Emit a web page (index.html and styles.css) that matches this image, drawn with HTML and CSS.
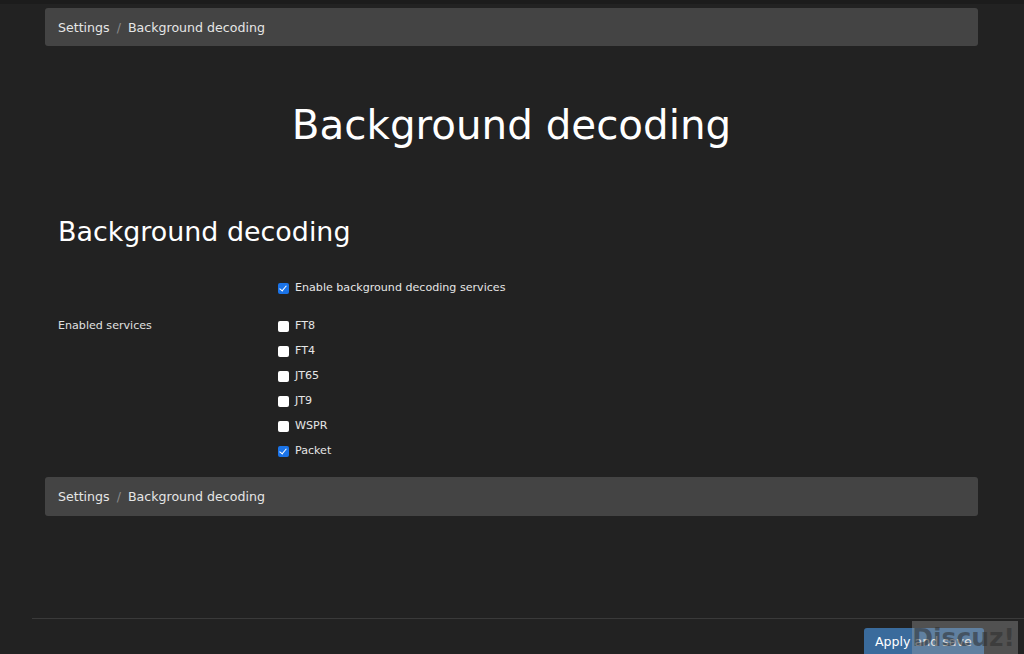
FILE: index.html
```html
<!DOCTYPE html>
<html>
<head>
<meta charset="utf-8">
<link rel="stylesheet" href="styles.css">
</head>
<body>
<div class="page">
  <div class="container">
    <nav class="crumbs">
      <span class="crumb">Settings</span><span class="sep">/</span><span class="crumb">Background decoding</span>
    </nav>
    <h1 class="title">Background decoding</h1>
    <h2 class="section">Background decoding</h2>
    <div class="row first">
      <div class="label"></div>
      <div class="field">
        <label class="check"><span class="box on"></span>Enable background decoding services</label>
      </div>
    </div>
    <div class="row">
      <div class="label">Enabled services</div>
      <div class="field list">
        <label class="check"><span class="box"></span>FT8</label>
        <label class="check"><span class="box"></span>FT4</label>
        <label class="check"><span class="box"></span>JT65</label>
        <label class="check"><span class="box"></span>JT9</label>
        <label class="check"><span class="box"></span>WSPR</label>
        <label class="check"><span class="box on"></span>Packet</label>
      </div>
    </div>
    <nav class="crumbs bottom">
      <span class="crumb">Settings</span><span class="sep">/</span><span class="crumb">Background decoding</span>
    </nav>
  </div>
  <footer class="footer">
    <button class="apply">Apply and save</button>
  </footer>
  <div class="watermark">Discuz!</div>
</div>
</body>
</html>
```
FILE: styles.css
```css
html, body {
  margin: 0;
  padding: 0;
  background: #222222;
  height: 100%;
  overflow: hidden;
}
body {
  font-family: "DejaVu Sans", Verdana, sans-serif;
  color: #e8e8e8;
}
.page {
  position: relative;
  height: 654px;
  border-top: 4px solid #1c1c1c;
  box-sizing: border-box;
}
.container {
  width: 933px;
  margin: 0 auto 0 45px;
  padding-top: 4px;
}
.crumbs {
  background: #444444;
  border-radius: 3px;
  height: 38px;
  display: flex;
  align-items: center;
  padding: 0 13px;
  font-size: 12.6px;
  color: #e6e6e6;
}
.sep {
  color: #8a8a8a;
  margin: 0 7px;
}
.title {
  margin: 55px 0 0;
  text-align: center;
  font-weight: normal;
  font-size: 40.4px;
  line-height: 48px;
  color: #ffffff;
}
.section {
  margin: 67px 0 0 13px;
  font-weight: normal;
  font-size: 26.9px;
  line-height: 32px;
  color: #ffffff;
}
.row {
  display: flex;
  font-size: 11.1px;
}
.row.first {
  margin-top: 27px;
}
.row + .row {
  margin-top: 13px;
}
.label {
  width: 220px;
  padding-left: 13px;
  line-height: 25px;
  color: #e0e0e0;
  flex-shrink: 0;
}
.field {
  display: flex;
  flex-direction: column;
}
.check {
  display: flex;
  align-items: center;
  height: 25px;
  color: #e6e6e6;
}
.box {
  width: 11px;
  height: 11px;
  background: #ffffff;
  border-radius: 2px;
  margin-right: 6px;
  margin-top: 2px;
  position: relative;
}
.box.on {
  background: #1a73e8;
}
.box.on::after {
  content: "";
  position: absolute;
  left: 3px;
  top: 1px;
  width: 3px;
  height: 6px;
  border: solid #ffffff;
  border-width: 0 1.6px 1.6px 0;
  transform: rotate(40deg);
}
.crumbs.bottom {
  margin-top: 14px;
  height: 39px;
}
.footer {
  position: absolute;
  left: 32px;
  right: 0;
  top: 614px;
  border-top: 1px solid #3a3a3a;
  height: 40px;
}
.apply {
  position: absolute;
  left: 832px;
  top: 9px;
  height: 34px;
  border: none;
  border-radius: 3px 3px 0 0;
  background: #3a6b9c;
  color: #ffffff;
  font-family: "DejaVu Sans", Verdana, sans-serif;
  font-size: 12.6px;
  white-space: nowrap;
  padding: 0 12px 8px 11px;
}
.watermark {
  position: absolute;
  left: 912px;
  top: 617px;
  width: 106px;
  height: 33px;
  background: rgba(170, 170, 170, 0.35);
  color: rgba(45, 45, 45, 0.55);
  font-family: "DejaVu Sans", sans-serif;
  font-weight: bold;
  font-size: 25px;
  line-height: 33px;
  text-align: right;
  padding-right: 3px;
  box-sizing: border-box;
  pointer-events: none;
}
```
